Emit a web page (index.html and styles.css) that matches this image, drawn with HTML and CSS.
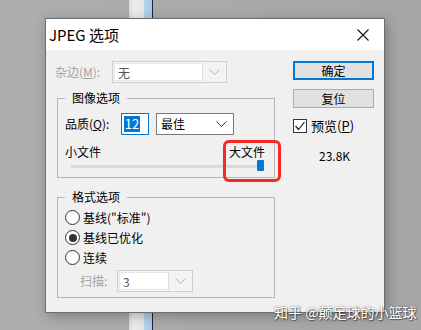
FILE: index.html
```html
<!DOCTYPE html>
<html lang="zh-CN">
<head>
    <meta charset="UTF-8">
    <title>JPEG 选项</title>
    <link rel="stylesheet" href="styles.css">
</head>
<body>
<div class="desktop">
    <div class="strip"></div>

    <div class="dialog">
        <div class="titlebar">
            <span class="title">JPEG 选项</span>
            <svg class="close" width="12" height="12" viewBox="0 0 12 12">
                <path d="M0.5 0.5 L11.5 11.5 M11.5 0.5 L0.5 11.5" stroke="#111" stroke-width="1.1" fill="none"/>
            </svg>
        </div>

        <div class="dlg-body">
            <div class="col-left">
                <div class="row matte">
                    <label class="lbl disabled">杂边(<u>M</u>):</label>
                    <div class="combo combo-off matte-combo">
                        <span class="combo-field">无</span>
                        <span class="combo-arrow">
                            <svg width="11" height="6" viewBox="0 0 11 6"><path d="M0.5 0.5 L5.5 5.5 L10.5 0.5" stroke="#b5b5b5" fill="none"/></svg>
                        </span>
                    </div>
                </div>

                <fieldset class="group group-image">
                    <legend>图像选项</legend>
                    <div class="row quality">
                        <label class="lbl q-lbl">品质(<u>Q</u>):</label>
                        <div class="num"><span class="num-sel">12</span></div>
                        <div class="combo combo-on">
                            <span class="combo-text">最佳</span>
                            <svg width="11" height="6" viewBox="0 0 11 6"><path d="M0.5 0.5 L5.5 5.5 L10.5 0.5" stroke="#333" fill="none"/></svg>
                        </div>
                    </div>
                    <div class="size-labels">
                        <span>小文件</span>
                        <span>大文件</span>
                    </div>
                    <div class="slider">
                        <div class="thumb"></div>
                    </div>
                </fieldset>

                <fieldset class="group group-format">
                    <legend>格式选项</legend>
                    <div class="radio-row"><span class="radio"></span><span>基线("标准")</span></div>
                    <div class="radio-row"><span class="radio checked"></span><span>基线已优化</span></div>
                    <div class="radio-row"><span class="radio"></span><span>连续</span></div>
                    <div class="row scan">
                        <label class="lbl disabled scan-lbl">扫描:</label>
                        <div class="combo combo-off scan-combo">
                            <span class="combo-field">3</span>
                            <span class="combo-arrow">
                                <svg width="11" height="6" viewBox="0 0 11 6"><path d="M0.5 0.5 L5.5 5.5 L10.5 0.5" stroke="#b5b5b5" fill="none"/></svg>
                            </span>
                        </div>
                    </div>
                </fieldset>
            </div>

            <div class="col-right">
                <div class="btn btn-default">确定</div>
                <div class="btn">复位</div>
                <div class="check-row">
                    <span class="checkbox">
                        <svg width="12" height="12" viewBox="0 0 12 12"><path d="M1.5 6 L4.5 9.5 L10.5 2" stroke="#222" stroke-width="1.2" fill="none"/></svg>
                    </span>
                    <span>预览(<u>P</u>)</span>
                </div>
                <div class="file-size">23.8K</div>
            </div>
        </div>
    </div>

    <!-- 红框标注 -->
    <div class="mark"></div>
    <div class="watermark">知乎 @颠足球的小篮球</div>
</div>
</body>
</html>
```

FILE: styles.css
```css
body {
    margin: 0;
    font-family: "Noto Sans CJK SC", "Noto Sans", sans-serif;
    font-size: 12px;
    color: #000;
}
.desktop {
    position: relative;
    width: 421px;
    height: 330px;
    overflow: hidden;
    background: linear-gradient(to right, #aeaeae, #a6a6a6);
}
.strip {
    position: absolute;
    left: 129px;
    top: 0;
    width: 24px;
    height: 330px;
    background: linear-gradient(to right, #d9d9d9 0, #ececec 4px, #e6e6e6 15px, #b7d2ee 15px, #a9c9ea 23px, #1b2533 23px);
}

/* ダイアログ本体 */
.dialog {
    position: absolute;
    left: 45px;
    top: 18px;
    width: 338px;
    height: 293px;
    border: 1px solid #6e6e6e;
    background: #f0f0f0;
    box-shadow: 2px 3px 12px rgba(0, 0, 0, 0.28);
    display: flex;
    flex-direction: column;
}
.titlebar {
    height: 31px;
    background: #fff;
    display: flex;
    align-items: center;
    justify-content: space-between;
    padding: 0 15px 0 3px;
}
.title {
    font-size: 15px;
    line-height: 18px;
}
.dlg-body {
    display: flex;
}
.col-left {
    width: 220px;
    padding-left: 9px;
}
.col-right {
    width: 81px;
    margin-left: 18px;
    padding-top: 11px;
}

.row {
    display: flex;
    align-items: center;
}
.lbl {
    line-height: 16px;
}
.disabled {
    color: #a3a3a3;
}
.matte {
    margin-top: 11px;
    height: 22px;
}
.matte .lbl {
    width: 57px;
}

/* コンボボックス */
.combo {
    height: 22px;
    box-sizing: border-box;
    display: flex;
    align-items: center;
}
.combo-off {
    border: 1px solid #cfcfcf;
    background: #f3f3f3;
    padding: 1px;
}
.combo-field {
    flex: 1;
    line-height: 18px;
    background: #fff;
    border: 1px solid #e8e8e8;
    border-right-color: #dcdcdc;
    color: #555;
    padding-left: 3px;
    box-sizing: border-box;
    height: 100%;
}
.combo-arrow {
    width: 22px;
    display: flex;
    justify-content: center;
}
.matte-combo {
    width: 115px;
}
.combo-on {
    width: 78px;
    margin-left: 7px;
    border: 1px solid #7a7a7a;
    background: #fff;
    justify-content: space-between;
    padding: 0 6px 0 4px;
}
.combo-text {
    line-height: 18px;
}

/* グループボックス */
.group {
    margin: 0 0 0 2px;
    width: 218px;
    box-sizing: border-box;
    border: 1px solid #b6b6b6;
    padding: 0 0 0 7px;
}
.group legend {
    padding: 0 7px;
    line-height: 16px;
}
.group-image {
    margin-top: 7px;
    padding-top: 7px;
    padding-bottom: 6px;
}
.group-format {
    margin-top: 11px;
    padding-top: 5px;
    padding-bottom: 5px;
}

.quality {
    height: 22px;
}
.q-lbl {
    width: 56px;
}
.num {
    width: 28px;
    height: 22px;
    box-sizing: border-box;
    border: 1px solid #0078d7;
    background: #fff;
    padding: 2px;
}
.num-sel {
    display: block;
    width: 16px;
    height: 16px;
    line-height: 16px;
    background: #0078d7;
    color: #fff;
    font-size: 13px;
    text-align: center;
}
.size-labels {
    margin-top: 9px;
    width: 200px;
    display: flex;
    justify-content: space-between;
    line-height: 16px;
}
.slider {
    margin-left: 6px;
    width: 193px;
    height: 11px;
    display: flex;
    justify-content: flex-end;
    background: linear-gradient(to bottom, transparent 5px, #c9c9c9 5px, #e4e4e4 6px, #c9c9c9 7px, transparent 8px);
}
.thumb {
    width: 7px;
    height: 11px;
    background: #0078d7;
    border-radius: 1px;
}

/* ラジオボタン */
.radio-row {
    display: flex;
    align-items: center;
    height: 15px;
    margin-bottom: 5px;
    line-height: 16px;
}
.radio {
    width: 15px;
    height: 15px;
    box-sizing: border-box;
    border: 1px solid #333;
    border-radius: 50%;
    background: #fff;
    margin-right: 3px;
    display: flex;
    align-items: center;
    justify-content: center;
}
.radio.checked::after {
    content: "";
    width: 8px;
    height: 8px;
    border-radius: 50%;
    background: #333;
}
.scan {
    margin-top: 1px;
    height: 22px;
}
.scan-lbl {
    margin-left: 15px;
    width: 37px;
}
.scan-combo {
    width: 76px;
}

/* ボタン */
.btn {
    height: 19px;
    box-sizing: border-box;
    border: 1px solid #adadad;
    background: #e1e1e1;
    text-align: center;
    line-height: 17px;
    margin-bottom: 9px;
}
.btn-default {
    border: 2px solid #0078d7;
    line-height: 15px;
}
.check-row {
    margin-top: 10px;
    display: flex;
    align-items: center;
    height: 15px;
    line-height: 16px;
    font-size: 13px;
}
.checkbox {
    width: 14px;
    height: 14px;
    box-sizing: border-box;
    border: 1px solid #333;
    background: #fff;
    margin-right: 4px;
    display: flex;
    align-items: center;
    justify-content: center;
}
.file-size {
    margin-top: 15px;
    padding-left: 26px;
    line-height: 16px;
}

.mark {
    position: absolute;
    left: 223px;
    top: 140px;
    width: 52px;
    height: 36px;
    border: 3px solid #f52a24;
    border-radius: 6px;
}
.watermark {
    position: absolute;
    left: 274px;
    top: 303px;
    font-size: 14px;
    line-height: 18px;
    color: #fff;
    text-shadow: 0 0 2px rgba(0, 0, 0, 0.6), 1px 1px 1px rgba(0, 0, 0, 0.4);
}
```
